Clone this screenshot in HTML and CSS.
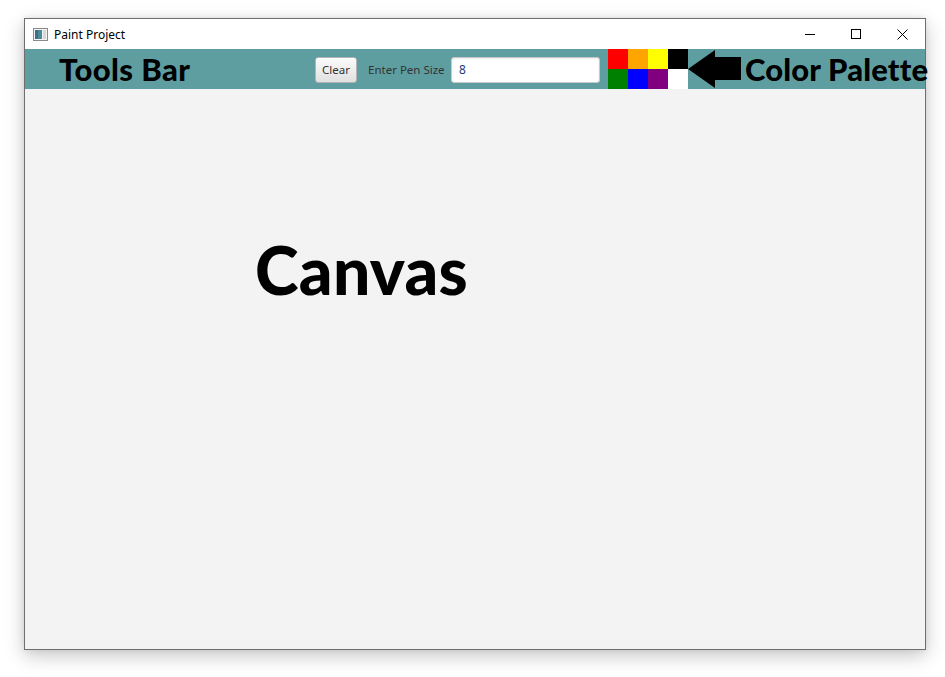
FILE: index.html
```html
<!DOCTYPE html>
<html>
<head>
<meta charset="utf-8">
<title>Paint Project</title>
<link rel="stylesheet" href="styles.css">
</head>
<body>
<div class="window">
  <div class="titlebar">
    <svg class="app-icon" width="15" height="13" viewBox="0 0 15 13">
      <rect x="0.5" y="0.5" width="14" height="12" fill="#f4f4f4" stroke="#8a8a8a"/>
      <rect x="2" y="2" width="7" height="9" fill="#4b8a96"/>
      <rect x="2" y="2" width="3" height="9" fill="#3c6f86"/>
      <rect x="10" y="2" width="3" height="9" fill="#d8d8d8"/>
    </svg>
    <span class="title">Paint Project</span>
    <div class="controls">
      <div class="ctl">
        <svg width="10" height="10" viewBox="0 0 10 10"><path d="M0 5.5H10" stroke="#000" stroke-width="1"/></svg>
      </div>
      <div class="ctl">
        <svg width="10" height="10" viewBox="0 0 10 10"><rect x="0.5" y="0.5" width="9" height="9" fill="none" stroke="#000" stroke-width="1"/></svg>
      </div>
      <div class="ctl">
        <svg width="11" height="11" viewBox="0 0 11 11"><path d="M0.5 0.5L10.5 10.5M10.5 0.5L0.5 10.5" stroke="#000" stroke-width="1"/></svg>
      </div>
    </div>
  </div>
  <div class="toolbar">
    <div class="tools-label">Tools Bar</div>
    <button class="btn">Clear</button>
    <span class="pen-label">Enter Pen Size</span>
    <div class="field">8</div>
    <div class="palette">
      <div class="swatch red"></div>
      <div class="swatch orange"></div>
      <div class="swatch yellow"></div>
      <div class="swatch black"></div>
      <div class="swatch green"></div>
      <div class="swatch blue"></div>
      <div class="swatch purple"></div>
      <div class="swatch white"></div>
    </div>
    <svg class="arrow" width="54" height="40" viewBox="0 0 54 40">
      <path d="M0 20L27 1V8H53V31H27V39Z" fill="#000"/>
    </svg>
    <div class="palette-label">Color Palette</div>
  </div>
  <div class="canvas">
    <div class="canvas-label">Canvas</div>
  </div>
</div>
</body>
</html>
```
FILE: styles.css
```css
html, body {
  margin: 0;
  padding: 0;
  background: #ffffff;
}
body {
  padding: 18px 0 0 24px;
  height: 677px;
  box-sizing: border-box;
  overflow: hidden;
}
.window {
  width: 902px;
  height: 632px;
  box-sizing: border-box;
  border: 1px solid #6e6e6e;
  background: #f3f3f3;
  box-shadow: 0 6px 18px rgba(0, 0, 0, 0.22), 0 0 6px rgba(0, 0, 0, 0.08);
  display: flex;
  flex-direction: column;
}
.titlebar {
  height: 30px;
  background: #ffffff;
  display: flex;
  align-items: center;
  font-family: "Noto Sans", "Open Sans", sans-serif;
  font-size: 12px;
  color: #000;
}
.app-icon {
  margin-left: 8px;
}
.title {
  margin-left: 6px;
}
.controls {
  margin-left: auto;
  display: flex;
  height: 30px;
}
.ctl {
  width: 46px;
  height: 30px;
  display: flex;
  align-items: center;
  justify-content: center;
}
.toolbar {
  height: 40px;
  background: #5f9ea0;
  display: flex;
  align-items: center;
  font-family: "Noto Sans", "Open Sans", sans-serif;
}
.tools-label {
  width: 256px;
  margin-left: 34px;
  font-family: "Lato", "Open Sans", sans-serif;
  font-weight: 900;
  font-size: 31px;
  letter-spacing: 0.4px;
  color: #000;
  white-space: nowrap;
  flex: 0 0 auto;
}
.btn {
  width: 42px;
  height: 26px;
  padding: 0;
  border: 1px solid #b4b4b4;
  border-radius: 3px;
  background: linear-gradient(#fbfbfb, #e0e0e0);
  box-shadow: inset 0 1px 0 #ffffff;
  font-family: "Noto Sans", "Open Sans", sans-serif;
  font-size: 11.5px;
  color: #333;
  flex: 0 0 auto;
  margin-top: 1px;
}
.pen-label {
  margin-left: 11px;
  font-size: 11.5px;
  color: #333;
  width: 74px;
  white-space: nowrap;
  flex: 0 0 auto;
}
.field {
  margin-left: 9px;
  width: 149px;
  height: 26px;
  box-sizing: border-box;
  border: 1px solid #c8c8c8;
  border-radius: 3px;
  background: #ffffff;
  box-shadow: inset 0 1px 2px rgba(0, 0, 0, 0.08);
  font-size: 12px;
  color: #1d3a7a;
  padding-left: 7px;
  line-height: 24px;
  flex: 0 0 auto;
  margin-top: 1px;
}
.palette {
  margin-left: 8px;
  display: grid;
  grid-template-columns: repeat(4, 20px);
  grid-template-rows: repeat(2, 20px);
  flex: 0 0 auto;
}
.swatch { width: 20px; height: 20px; }
.red { background: #ff0000; }
.orange { background: #ffa500; }
.yellow { background: #ffff00; }
.black { background: #000000; }
.green { background: #008000; }
.blue { background: #0000ff; }
.purple { background: #800080; }
.white { background: #ffffff; }
.arrow {
  flex: 0 0 auto;
  display: block;
}
.palette-label {
  margin-left: 3px;
  font-family: "Lato", "Open Sans", sans-serif;
  font-weight: 900;
  font-size: 31px;
  letter-spacing: 0.15px;
  color: #000;
  white-space: nowrap;
  flex: 0 0 auto;
}
.canvas {
  flex: 1;
  background: #f3f3f3;
  padding: 148px 0 0 230px;
}
.canvas-label {
  font-family: "Lato", "Open Sans", sans-serif;
  font-weight: 900;
  font-size: 66px;
  letter-spacing: 0.3px;
  color: #000;
  line-height: 1;
}
```
